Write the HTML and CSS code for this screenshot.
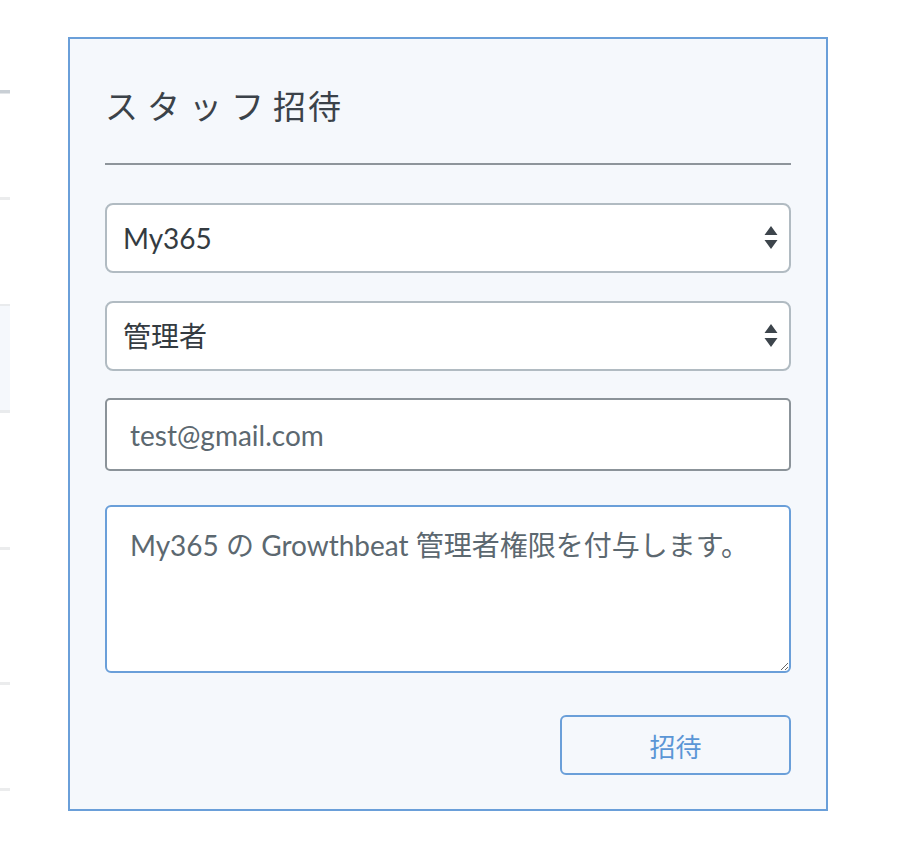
FILE: index.html
```html
<!DOCTYPE html>
<html lang="ja">
<head>
<meta charset="utf-8">
<title>スタッフ招待</title>
<link rel="stylesheet" href="styles.css">
</head>
<body>
<div class="page">
  <div class="strip">
    <div class="rule rule-dark r1"></div>
    <div class="rule r2"></div>
    <div class="band"></div>
    <div class="rule r3"></div>
    <div class="rule r4"></div>
    <div class="rule r5"></div>
  </div>
  <div class="panel">
    <h1 class="title"><span class="kana">スタッフ</span><span class="kanji">招待</span></h1>
    <hr class="divider">
    <form class="form">
      <div class="select-wrap">
        <select class="field select"><option>My365</option></select>
        <svg class="arrows" width="14" height="24" viewBox="0 0 14 24"><path d="M7 0 L13.5 9 H0.5 Z M0.5 14 H13.5 L7 23 Z" fill="#3d454c"/></svg>
      </div>
      <div class="select-wrap gap28">
        <select class="field select"><option>管理者</option></select>
        <svg class="arrows" width="14" height="24" viewBox="0 0 14 24"><path d="M7 0 L13.5 9 H0.5 Z M0.5 14 H13.5 L7 23 Z" fill="#3d454c"/></svg>
      </div>
      <input class="field input" type="text" value="test@gmail.com">
      <textarea class="field textarea">My365 の Growthbeat 管理者権限を付与します。</textarea>
      <div class="actions">
        <button type="button" class="btn">招待</button>
      </div>
    </form>
  </div>
</div>
</body>
</html>
```
FILE: styles.css
```css
* { box-sizing: border-box; }
html, body { margin: 0; padding: 0; background: #ffffff; }
body {
  font-family: "Lato", "Noto Sans CJK JP", sans-serif;
  width: 910px;
  height: 854px;
  overflow: hidden;
}
.page {
  display: flex;
  align-items: flex-start;
}
.strip {
  width: 10px;
  display: flex;
  flex-direction: column;
}
.rule { height: 3px; background: #ebeced; }
.rule-dark { background: #c9cfd5; border-bottom: 1px solid #e3e6e9; height: 4px; }
.r1 { margin-top: 90px; }
.r2 { margin-top: 103px; }
.band {
  margin-top: 104px;
  height: 109px;
  background: #f5f8fc;
  border-top: 2px solid #e9ebed;
  border-bottom: 3px solid #e9ebed;
}
.r3 { margin-top: 134px; }
.r4 { margin-top: 132px; }
.r5 { margin-top: 103px; }

.panel {
  margin-left: 58px;
  margin-top: 37px;
  width: 760px;
  height: 774px;
  background: #f5f8fc;
  border: 2px solid #6a9fd9;
  padding: 0 35px;
}
.title {
  margin: 48px 0 0 0;
  height: 36px;
  line-height: 36px;
  font-family: "Noto Sans CJK JP", sans-serif;
  font-size: 33px;
  font-weight: 400;
  color: #3b4249;
}
.kana { letter-spacing: 9px; }
.kanji { letter-spacing: 2px; }
.divider {
  margin: 40px 0 0 0;
  border: 0;
  height: 2px;
  background: #8e959b;
}
.form {
  display: flex;
  flex-direction: column;
  margin-top: 38px;
}
.field {
  display: block;
  width: 100%;
  font-family: "Lato", "Noto Sans CJK JP", sans-serif;
  font-size: 28px;
  background: #ffffff;
  outline: none;
  margin: 0;
}
.select-wrap { position: relative; }
.gap28 { margin-top: 28px; }
.select {
  -webkit-appearance: none;
  appearance: none;
  height: 70px;
  border: 2px solid #b1bbc2;
  border-radius: 8px;
  padding: 0 50px 0 16px;
  color: #343b41;
}
.arrows {
  position: absolute;
  right: 13px;
  top: 23px;
}
.input {
  margin-top: 27px;
  height: 73px;
  border: 2px solid #8b9399;
  border-radius: 5px;
  padding: 0 23px;
  color: #5c6870;
}
.textarea {
  margin-top: 34px;
  height: 168px;
  border: 2px solid #6a9fd9;
  border-radius: 6px;
  padding: 20px 23px;
  color: #5c6870;
  line-height: 36px;
  resize: both;
}
.actions {
  display: flex;
  justify-content: flex-end;
  margin-top: 42px;
}
.btn {
  width: 231px;
  height: 60px;
  border: 2px solid #6a9fd9;
  border-radius: 6px;
  background: transparent;
  color: #5b96d6;
  font-family: "Lato", "Noto Sans CJK JP", sans-serif;
  font-size: 26px;
  padding: 0;
}
```
